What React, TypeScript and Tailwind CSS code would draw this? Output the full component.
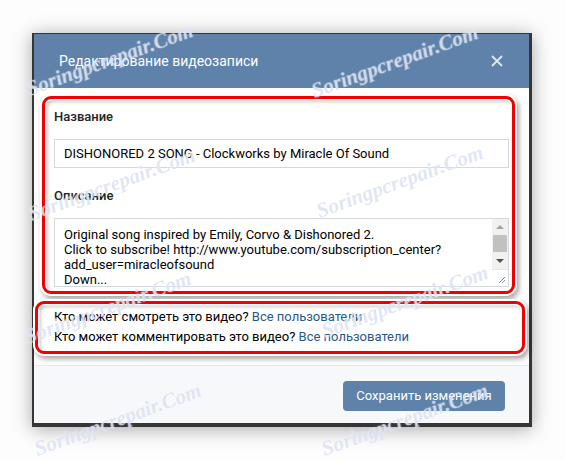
import React from "react";

const marks: { x: number; y: number }[] = [
  { x: 110, y: 60 },
  { x: 395, y: 62 },
  { x: 112, y: 185 },
  { x: 400, y: 182 },
  { x: 108, y: 308 },
  { x: 405, y: 302 },
  { x: 118, y: 420 },
  { x: 405, y: 420 },
];

function Watermark({ x, y }: { x: number; y: number }) {
  return (
    <div
      className="absolute pointer-events-none whitespace-nowrap text-[21px] italic font-bold text-[rgba(150,168,220,0.3)] [font-family:'Liberation_Serif',serif] [text-shadow:0_0_1px_rgba(255,255,255,0.9)]"
      style={{ left: x, top: y, transform: "translate(-50%,-50%) rotate(-20deg)" }}
    >
      Soringpcrepair.Com
    </div>
  );
}

export default function App() {
  return (
    <div className="relative w-[565px] h-[460px] overflow-hidden bg-[#fdfdfd] [font-family:Roboto,'Open_Sans',sans-serif]">
      <div className="pt-[33px] pl-[32px]">
        <div className="w-[500px] border-t border-l-2 border-r-[3px] border-b-4 border-[#363636] shadow-[0_2px_18px_rgba(0,0,0,0.35)]">
          {/* header */}
          <div className="h-[54px] bg-[#5e82a9] flex items-center justify-between pl-[25px] pr-[25px]">
            <span className="text-[14px] text-white">Редактирование видеозаписи</span>
            <svg width="12" height="12" viewBox="0 0 12 12" className="mr-[1px]">
              <path d="M1 1L11 11M11 1L1 11" stroke="rgba(255,255,255,0.8)" strokeWidth="1.8" />
            </svg>
          </div>
          {/* body */}
          <div className="bg-white px-5 pt-[21px] pb-[18px] text-[13px]">
            <div className="leading-4 font-medium text-[#222]">Название</div>
            <div className="mt-[14px] h-[29px] border border-[#d3d9de] flex items-center px-[9px] text-black">
              DISHONORED 2 SONG - Clockworks by Miracle Of Sound
            </div>
            <div className="mt-[20px] leading-4 font-medium text-[#222]">Описание</div>
            <div className="mt-[14px] h-[69px] border border-[#d3d9de] relative overflow-hidden">
              <div className="pl-[9px] pt-[8px] leading-[15px] text-black">
                <div>Original song inspired by Emily, Corvo &amp; Dishonored 2.</div>
                <div>Click to subscribe! http://www.youtube.com/subscription_center?</div>
                <div>add_user=miracleofsound</div>
                <div>Down...</div>
              </div>
              <div className="absolute right-0 top-0 bottom-0 w-[16px] bg-[#f1f1f1] flex flex-col">
                <div className="h-[16px] flex items-center justify-center">
                  <div className="w-0 h-0 border-l-[4px] border-r-[4px] border-b-[4px] border-l-transparent border-r-transparent border-b-[#a3a3a3]" />
                </div>
                <div className="mx-[1px] h-[17px] bg-[#c1c1c1]" />
                <div className="h-[16px] mt-[1px] flex items-center justify-center">
                  <div className="w-0 h-0 border-l-[4px] border-r-[4px] border-t-[4px] border-l-transparent border-r-transparent border-t-[#505050]" />
                </div>
                <div className="flex-1 bg-white border-t border-[#e6e6e6] relative">
                  <svg width="8" height="8" viewBox="0 0 8 8" className="absolute right-[2px] bottom-[2px]">
                    <path d="M7 1L1 7M7 4L4 7" stroke="#888" strokeWidth="1" />
                  </svg>
                </div>
              </div>
            </div>
            <div className="mt-[20px] leading-[20px] text-black">
              <div>
                Кто может смотреть это видео? <span className="text-[#2a5885]">Все пользователи</span>
              </div>
              <div>
                Кто может комментировать это видео? <span className="text-[#2a5885]">Все пользователи</span>
              </div>
            </div>
          </div>
          {/* footer */}
          <div className="border-t border-[#e7e8ec] bg-[#f7f8fa] h-[58px] flex justify-end items-start pt-[15px] pr-[24px]">
            <button className="h-[30px] w-[162px] rounded-[4px] bg-[#5e82a9] text-white text-[13px]">
              Сохранить изменения
            </button>
          </div>
        </div>
      </div>

      {/* red annotation boxes */}
      <div className="absolute left-[42px] top-[96px] w-[473px] h-[198px] rounded-[9px] border-[3px] border-[#f00000] shadow-[0_0_0_2px_#fff,2px_3px_5px_2px_rgba(0,0,0,0.35),inset_0_0_0_1.5px_#fff,inset_2px_2px_4px_rgba(0,0,0,0.3)]" />
      <div className="absolute left-[35px] top-[301px] w-[490px] h-[53px] rounded-[9px] border-[3px] border-[#f00000] shadow-[0_0_0_2px_#fff,2px_3px_5px_2px_rgba(0,0,0,0.35),inset_0_0_0_1.5px_#fff,inset_2px_2px_4px_rgba(0,0,0,0.3)]" />

      {marks.map((m, i) => (
        <Watermark key={i} x={m.x} y={m.y} />
      ))}
    </div>
  );
}
